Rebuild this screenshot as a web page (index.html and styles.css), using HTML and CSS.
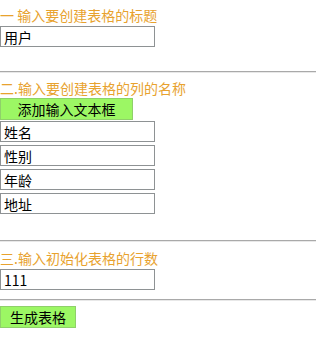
FILE: index.html
```html
<!DOCTYPE html>
<html lang="zh-CN">
<head>
    <meta charset="UTF-8">
    <title>创建表格</title>
    <link rel="stylesheet" href="styles.css">
</head>
<body>
    <!-- 标题 -->
    <div class="step step-first">
        <p class="label">一 输入要创建表格的标题</p>
        <input type="text" class="field" value="用户">
    </div>
    <hr>

    <!-- 列名 -->
    <div class="step">
        <p class="label">二.输入要创建表格的列的名称</p>
        <button class="btn btn-add">添加输入文本框</button>
        <div class="columns">
            <input type="text" class="field" value="姓名">
            <input type="text" class="field" value="性别">
            <input type="text" class="field" value="年龄">
            <input type="text" class="field" value="地址">
        </div>
    </div>
    <hr class="hr-wide">

    <!-- 行数 -->
    <div class="step">
        <p class="label">三.输入初始化表格的行数</p>
        <input type="text" class="field" value="111">
    </div>
    <hr class="hr-tight">

    <button class="btn btn-make">生成表格</button>
</body>
</html>
```

FILE: styles.css
```css
* {
    margin: 0;
    padding: 0;
    box-sizing: border-box;
}

body {
    font-family: "Noto Sans CJK SC", "DejaVu Sans", sans-serif;
    background: #fff;
    color: #000;
}

.step {
    display: flex;
    flex-direction: column;
    align-items: flex-start;
}

.step-first {
    padding-top: 6px;
}

.label {
    font-size: 14px;
    line-height: 18px;
    color: #e8a22e;
    height: 18px;
    margin-bottom: 2px;
    white-space: pre;
}

.field {
    width: 155px;
    height: 21px;
    border: 1px solid #8e9294;
    padding: 0 3px;
    font-family: "Noto Sans CJK SC", "DejaVu Sans", sans-serif;
    font-size: 14px;
    color: #000;
    outline: none;
}

.columns {
    display: flex;
    flex-direction: column;
    gap: 3px;
    margin-top: 1px;
}

hr {
    border: none;
    border-top: 1px solid #a9a9a9;
    border-bottom: 1px solid #e8e8e8;
    margin: 24px 0 6px;
}

.hr-wide {
    margin: 26px 0 7px;
}

.hr-tight {
    margin: 9px 0 5px;
}

.btn {
    background: #9cf764;
    border: 1px solid #8fd06a;
    font-family: "Noto Sans CJK SC", "DejaVu Sans", sans-serif;
    font-size: 14px;
    line-height: 20px;
    height: 22px;
    color: #000;
    cursor: pointer;
}

.btn-add {
    width: 133px;
    margin-top: -1px;
}

.btn-make {
    display: block;
    width: 76px;
}
```
